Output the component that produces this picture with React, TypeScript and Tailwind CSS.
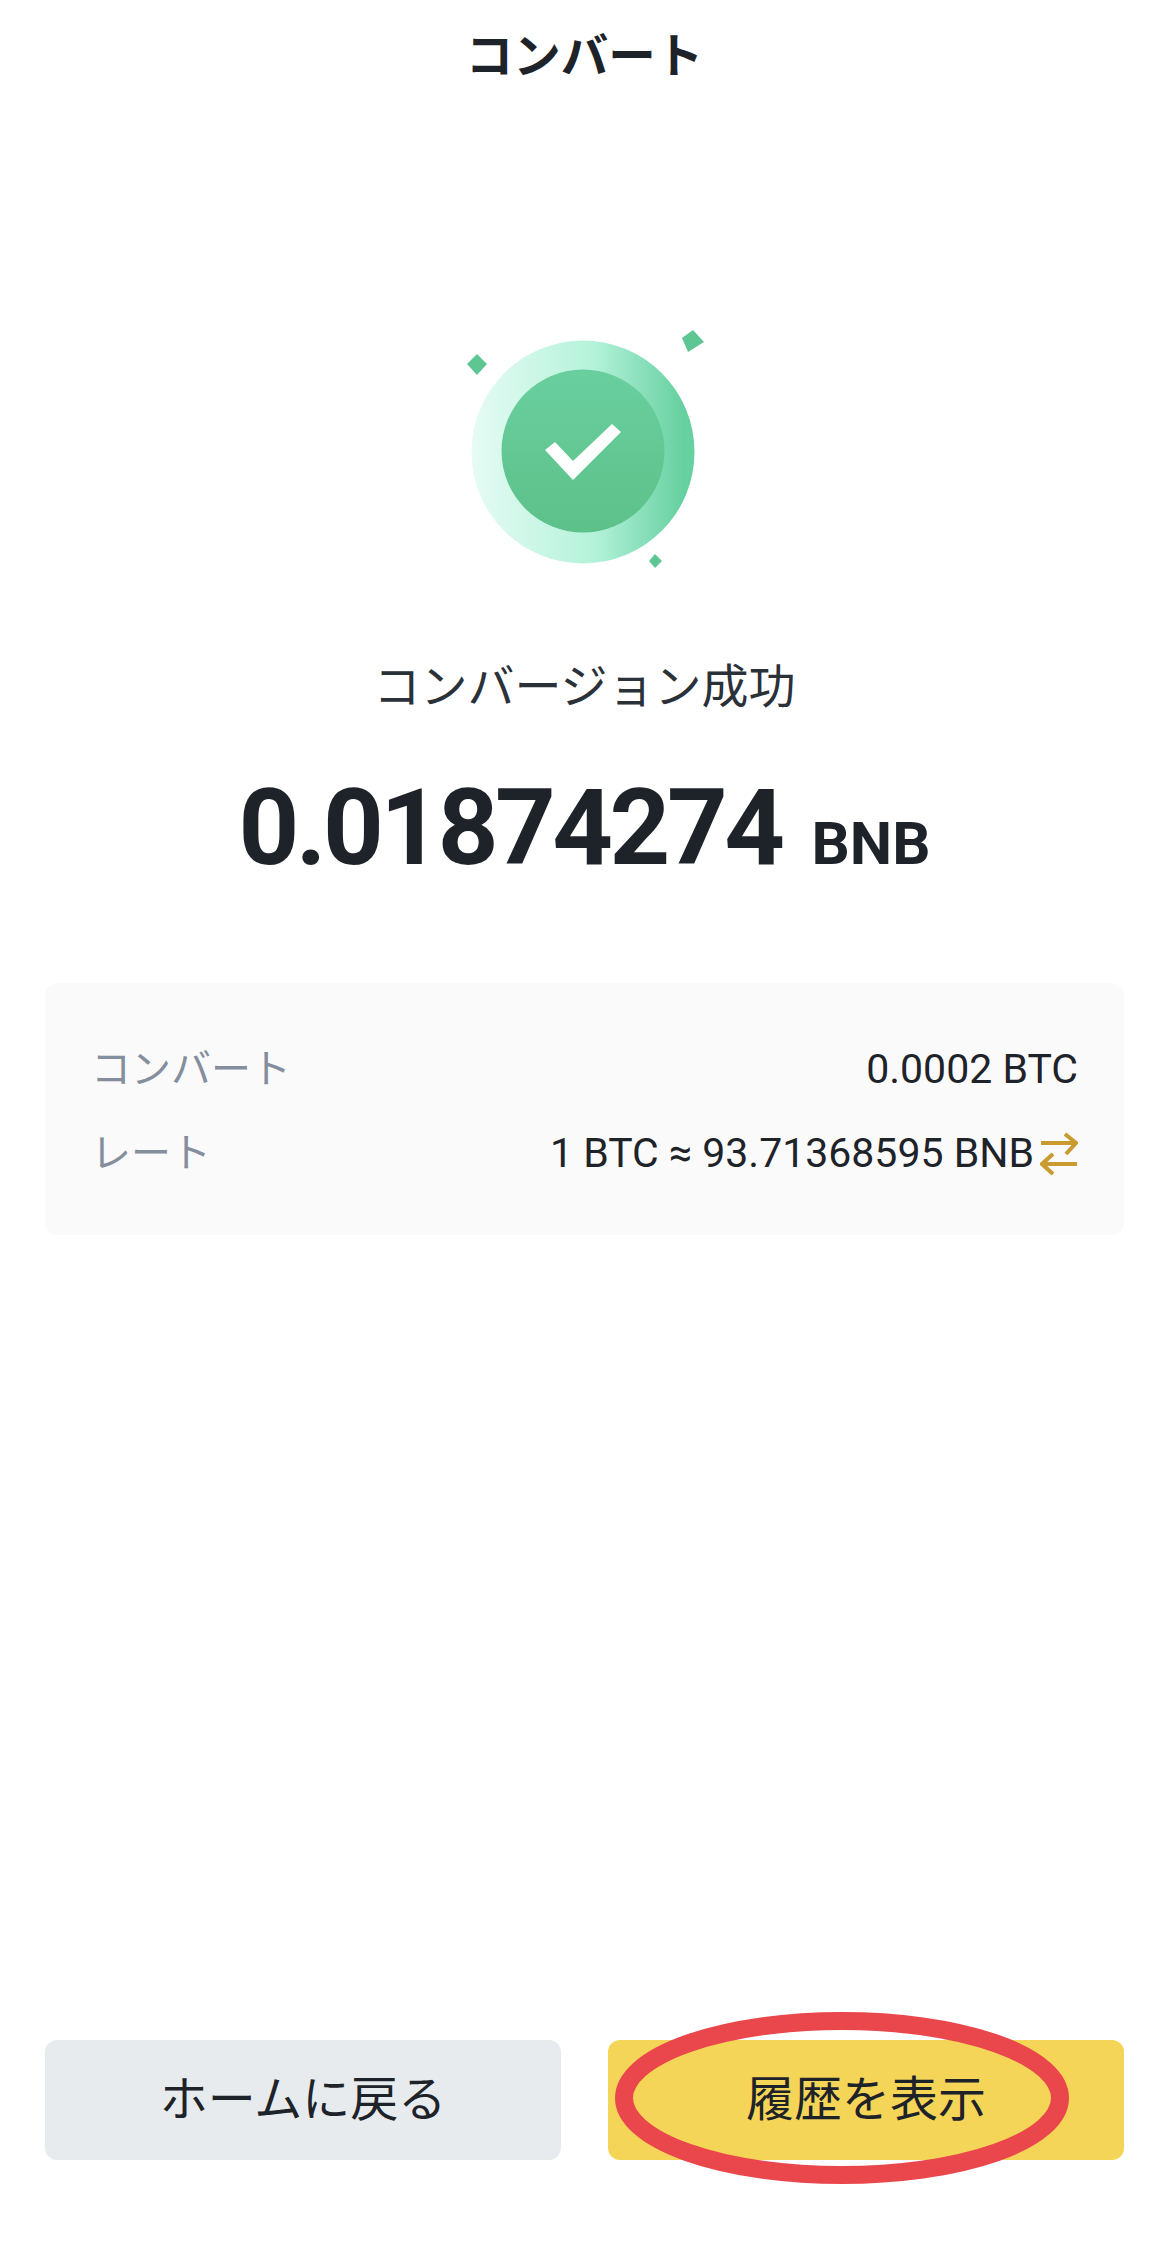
const font = "font-['Roboto','Noto_Sans_CJK_JP',sans-serif]"

const SuccessIcon = () => (
  <svg width="330" height="290" viewBox="0 0 330 290" className="block">
    <defs>
      <linearGradient id="outer" x1="0" x2="1" y1="0" y2="0">
        <stop offset="0" stopColor="#e6fbf4" />
        <stop offset="0.55" stopColor="#b4f2da" />
        <stop offset="0.95" stopColor="#66d0a0" />
      </linearGradient>
      <linearGradient id="inner" x1="0" x2="0" y1="0" y2="1">
        <stop offset="0" stopColor="#69cf9f" />
        <stop offset="1" stopColor="#5cc189" />
      </linearGradient>
    </defs>
    <circle cx="163" cy="152" r="111.5" fill="url(#outer)" />
    <circle cx="163" cy="151" r="81.5" fill="url(#inner)" />
    <path d="M125 150 L135 142 L153 161 L192 124 L201 132 L153 180 Z" fill="#fff" />
    <path d="M57 54 L67 64 L57 75 L47 64 Z" fill="#5ec692" />
    <path d="M273 30 L284 42 L268 52 L262 38 Z" fill="#5ec692" />
    <path d="M235 254 L242 261 L235 268 L229 261 Z" fill="#5ec692" />
  </svg>
)

const SwapIcon = () => (
  <svg width="38" height="44" viewBox="0 0 38 44" className="block shrink-0">
    <path d="M1 11 H35 M25 2 L36 11 L26 22" fill="none" stroke="#c99a2e" strokeWidth="4" />
    <path d="M37 32 H3 M13 22 L2 32 L13 42" fill="none" stroke="#c99a2e" strokeWidth="4" />
  </svg>
)

const App = () => {
  return (
    <div className={`${font} relative flex h-[2243px] w-[1169px] flex-col bg-white text-[#1e2329]`}>
      <div className="flex h-[115px] items-center justify-center text-[47.5px] font-bold">コンバート</div>

      <div className="mt-[185px] flex justify-center">
        <div className="w-[330px]">
          <SuccessIcon />
        </div>
      </div>

      <div className="mt-[67px] text-center text-[47px] leading-[60px] text-[#2b3139]">コンバージョン成功</div>

      <div className="mt-[51px] flex items-baseline justify-center gap-[30px] font-bold leading-[120px]">
        <span className="text-[106px] tracking-[-3.5px]">0.01874274</span>
        <span className="text-[60px]">BNB</span>
      </div>

      <div className="mx-[45px] mt-[79px] flex h-[252px] flex-col gap-[34px] rounded-[12px] bg-[#fafafa] px-[46px] pt-[62px]">
        <div className="flex h-[50px] items-center justify-between">
          <span className="text-[40px] text-[#848e9c]">コンバート</span>
          <span className="text-[41px]">0.0002 BTC</span>
        </div>
        <div className="flex h-[50px] items-center justify-between">
          <span className="text-[40px] text-[#848e9c]">レート</span>
          <div className="flex items-center gap-[6px]">
            <span className="text-[41px]">1 BTC ≈ 93.71368595 BNB</span>
            <SwapIcon />
          </div>
        </div>
      </div>

      <div className="mx-[45px] mt-auto mb-[83px] flex gap-[47px]">
        <button className="flex h-[120px] flex-1 items-center justify-center rounded-[12px] bg-[#e8ebee] text-[48px]">
          ホームに戻る
        </button>
        <button className="flex h-[120px] flex-1 items-center justify-center rounded-[12px] bg-[#f5d558] text-[48px]">
          履歴を表示
        </button>
      </div>

      {/* red marker drawn over the button */}
      <svg width="480" height="190" viewBox="0 0 480 190" className="absolute left-[603px] top-[2003px]">
        <ellipse cx="239" cy="95" rx="218" ry="77" fill="none" stroke="#e9474c" strokeWidth="18" />
      </svg>
    </div>
  )
}

export default App
